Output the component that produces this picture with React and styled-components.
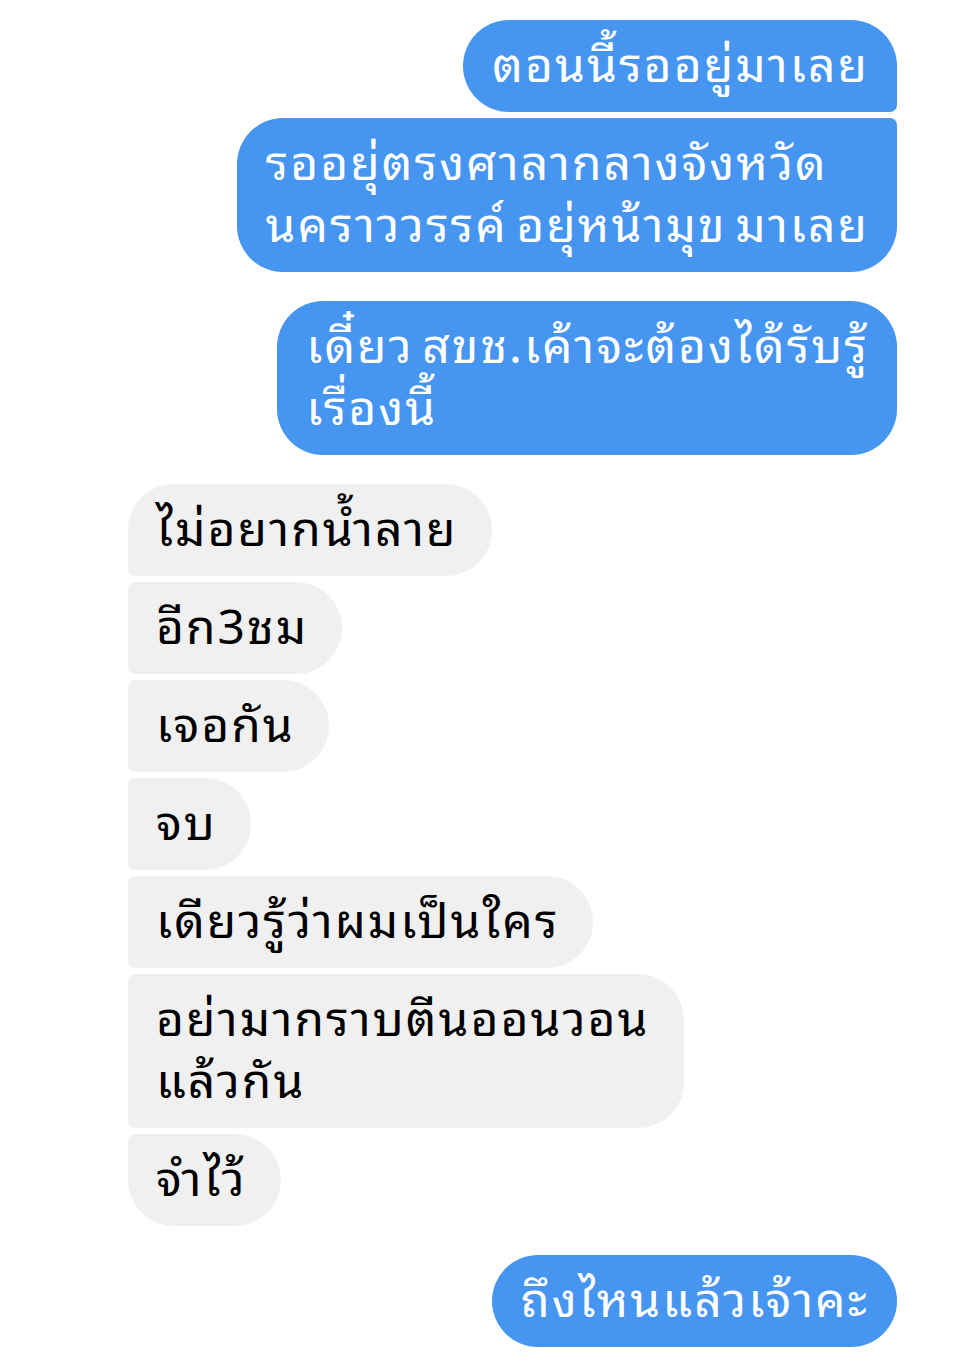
import styled, { createGlobalStyle, css } from "styled-components";

const GlobalStyle = createGlobalStyle`
  body {
    margin: 0;
    background: #ffffff;
    font-family: "Noto Sans Thai Looped", "Loma", "Garuda", "Noto Sans Thai", "Noto Sans", sans-serif;
  }
`;

const messages = [
  { from: "me", text: "ตอนนี้รออยู่มาเลย", group: "first" },
  { from: "me", text: "รออยุ่ตรงศาลากลางจังหวัด\nนคราววรรค์ อยุ่หน้ามุข มาเลย", group: "last" },
  { from: "me", text: "เดี๋ยว สขช.เค้าจะต้องได้รับรู้\nเรื่องนี้", group: "single", gapTop: 29 },
  { from: "them", text: "ไม่อยากน้ำลาย", group: "first", gapTop: 29 },
  { from: "them", text: "อีก3ชม", group: "middle" },
  { from: "them", text: "เจอกัน", group: "middle" },
  { from: "them", text: "จบ", group: "middle" },
  { from: "them", text: "เดียวรู้ว่าผมเป็นใคร", group: "middle" },
  { from: "them", text: "อย่ามากราบตีนออนวอน\nแล้วกัน", group: "middle" },
  { from: "them", text: "จำไว้", group: "last" },
  { from: "me", text: "ถึงไหนแล้วเจ้าคะ", group: "single", gapTop: 29 },
];

const BIG = 46;
const SMALL = 7;

// messenger style: corners on the sender's side shrink where bubbles stack
const corners = (from, group) => {
  const top = group === "middle" || group === "last" ? SMALL : BIG;
  const bottom = group === "middle" || group === "first" ? SMALL : BIG;
  if (from === "me") return `${BIG}px ${top}px ${bottom}px ${BIG}px`;
  return `${top}px ${BIG}px ${BIG}px ${bottom}px`;
};

const App = () => {
  return (
    <Page>
      <GlobalStyle />
      <Thread>
        {messages.map((m, i) => (
          <Row key={i} $from={m.from} $gapTop={m.gapTop}>
            <Bubble $from={m.from} $radius={corners(m.from, m.group)}>
              {m.text}
            </Bubble>
          </Row>
        ))}
      </Thread>
    </Page>
  );
};

const Page = styled.div`
  width: 958px;
  min-height: 1366px;
  background: #ffffff;
  box-sizing: border-box;
  padding: 20px 61px 0 128px;
`;

const Thread = styled.div`
  display: flex;
  flex-direction: column;
  gap: 6px;
`;

const Row = styled.div`
  display: flex;
  justify-content: ${(p) => (p.$from === "me" ? "flex-end" : "flex-start")};
  margin-top: ${(p) => (p.$gapTop ? `${p.$gapTop - 6}px` : "0")};
`;

const Bubble = styled.div`
  white-space: pre-line;
  font-size: 48px;
  line-height: 62px;
  letter-spacing: 2px;
  word-spacing: -6px;
  padding: 10px 28px 20px 29px;
  border-radius: ${(p) => p.$radius};
  ${(p) =>
    p.$from === "me"
      ? css`
          background: #4595f1;
          color: #ffffff;
        `
      : css`
          background: #f0f0f0;
          color: #000000;
          padding-left: 28px;
          padding-right: 34px;
        `}
`;

export default App;
